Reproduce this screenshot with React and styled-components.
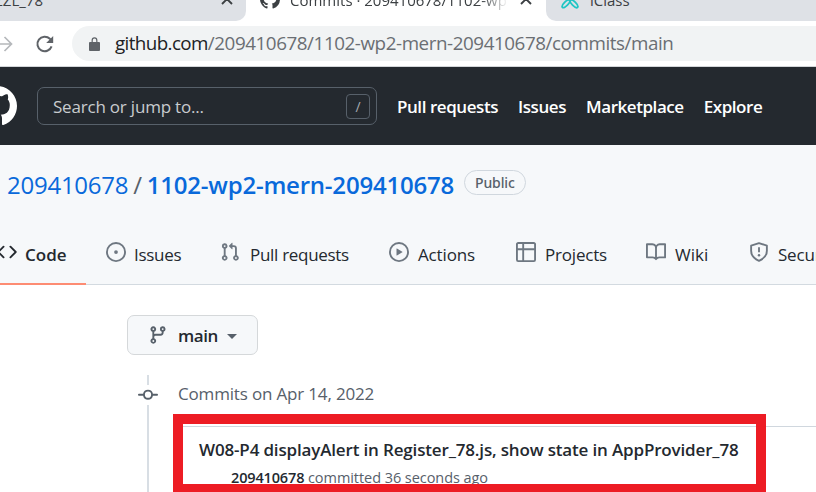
import React from 'react';
import styled, { createGlobalStyle } from 'styled-components';

const GlobalStyle = createGlobalStyle`
  * { box-sizing: border-box; }
  html, body { margin: 0; background: #fff; overflow: hidden; }
`;

const Page = styled.div`
  width: 816px;
  height: 492px;
  overflow: hidden;
  position: relative;
  display: flex;
  flex-direction: column;
  background: #fff;
  color: #24292f;
  font-family: "Open Sans", "Noto Sans", sans-serif;
  font-size: 17px;
  white-space: nowrap;
`;

const Glyph = styled.svg`
  width: ${(p) => p.$size || 20}px;
  height: ${(p) => p.$size || 20}px;
  flex: none;
  display: block;
  fill: currentColor;
`;

/* Browser chrome */
const TabStrip = styled.div`
  flex: none;
  height: 21px;
  display: flex;
  overflow: hidden;
  color: #3c4043;
  font-size: 15px;
`;

const Tab = styled.div`
  width: ${(p) => p.$width}px;
  flex: none;
  height: 21px;
  overflow: hidden;
  background: ${(p) => (p.$active ? '#fff' : '#dee1e6')};
  border-radius: ${(p) => p.$radius || 0};
`;

const TabContent = styled.div`
  display: flex;
  align-items: center;
  height: 30px;
  margin-top: -15px;
  padding: 0 ${(p) => p.$right || 0}px 0 ${(p) => p.$left || 0}px;
`;

const TabTitle = styled.span`
  width: ${(p) => p.$width}px;
  margin: 0 auto 0 ${(p) => p.$gap || 0}px;
  line-height: 30px;
  overflow: hidden;
  direction: ${(p) => (p.$clipStart ? 'rtl' : 'ltr')};
  mask-image: ${(p) => (p.$fade ? 'linear-gradient(90deg, #000 88%, transparent)' : 'none')};
`;

const TabIcon = styled.span`
  display: flex;
  margin-top: ${(p) => p.$shift || 0}px;
`;

const Toolbar = styled.div`
  flex: none;
  height: 46px;
  display: flex;
  align-items: center;
  border-bottom: 1px solid #d3d6d9;
  color: #5f6368;
`;

const ForwardButton = styled.span`
  flex: none;
  display: flex;
  width: 34px;
  margin-left: -7px;
  color: #b5b8bb;
`;

const ReloadButton = styled.span`
  flex: none;
  display: flex;
  width: 45px;
  padding-left: 8px;
`;

const AddressBar = styled.div`
  flex: none;
  width: 780px;
  height: 35px;
  display: flex;
  align-items: center;
  padding: 0 0 1px 17px;
  border-radius: 18px;
  background: #f1f3f4;
  font-size: 18.8px;
`;

const Lock = styled.svg`
  width: 11px;
  height: 14px;
  margin-top: 2px;
  fill: currentColor;
`;

const Host = styled.span`
  margin-left: 15px;
  color: #202124;
  letter-spacing: -0.6px;
`;

const UrlPath = styled.span`
  color: #6a6e73;
  letter-spacing: -0.42px;
`;

/* Site header */
const SiteHeader = styled.header`
  flex: none;
  height: 78px;
  display: flex;
  align-items: center;
  background: #24292f;
  color: #fff;
`;

const MarkLink = styled.a`
  display: flex;
  margin-left: -23px;
`;

const SearchBox = styled.div`
  width: 340px;
  height: 38px;
  margin: 0 20px;
  padding: 0 6px 0 15px;
  display: flex;
  align-items: center;
  justify-content: space-between;
  border: 1px solid #57606a;
  border-radius: 7px;
  color: #c8cbce;
  letter-spacing: -0.2px;
`;

const SlashKey = styled.kbd`
  width: 24px;
  height: 25px;
  display: flex;
  align-items: center;
  justify-content: center;
  border: 1px solid #57606a;
  border-radius: 4px;
  font: 14px "Open Sans", sans-serif;
  color: #a5aab0;
`;

const SiteNav = styled.nav`
  display: flex;
  gap: 20px;
  font-weight: 600;
  letter-spacing: -0.44px;
`;

/* Repository header */
const RepoHeader = styled.section`
  flex: none;
  height: 140px;
  display: flex;
  flex-direction: column;
  justify-content: space-between;
  background: #f6f8fa;
  box-shadow: inset 0 -1px #d3dae0;
`;

const RepoTitle = styled.h1`
  height: 78px;
  margin: 0;
  padding-left: 7px;
  display: flex;
  align-items: center;
  color: #0969da;
  font-size: 24px;
  font-weight: 400;
  letter-spacing: -0.25px;
`;

const Divider = styled.span`
  margin: 0 5px;
  color: #57606a;
`;

const RepoName = styled.strong`
  font-weight: 600;
  letter-spacing: -0.22px;
`;

const Badge = styled.span`
  height: 25px;
  width: 62px;
  margin: -4px 0 0 10px;
  display: flex;
  align-items: center;
  justify-content: center;
  border: 1px solid #d0d7de;
  border-radius: 13px;
  color: #57606a;
  font-family: "Noto Sans", "Open Sans", sans-serif;
  font-size: 14px;
  font-weight: 500;
  letter-spacing: -0.1px;
`;

const RepoTabs = styled.nav`
  display: flex;
  height: 62px;
`;

const RepoTab = styled.a`
  flex: none;
  width: ${(p) => p.$width}px;
  height: 62px;
  margin-left: ${(p) => p.$offset || 0}px;
  padding-bottom: 2px;
  display: flex;
  align-items: center;
  gap: ${(p) => p.$gap || 9}px;
  font-weight: ${(p) => (p.$active ? 600 : 400)};
  letter-spacing: ${(p) => p.$track || 0}px;
  border-bottom: 2px solid ${(p) => (p.$active ? '#fd8c73' : 'transparent')};

  svg { color: ${(p) => (p.$active ? '#24292f' : '#6e7781')}; }
  span { padding-top: 4px; }
`;

/* Commit list */
const Commits = styled.main`
  flex: none;
  padding: 30px 0 0 127px;
`;

const BranchButton = styled.button`
  width: 131px;
  height: 40px;
  padding: 0 0 0 20px;
  display: flex;
  align-items: center;
  border: 1px solid #d5d8da;
  border-radius: 7px;
  background: #f6f8fa;
  color: #57606a;
  font: 600 17px "Open Sans", sans-serif;
  letter-spacing: -0.4px;
`;

const BranchName = styled.span`
  margin: 0 9px 0 10px;
  color: #24292f;
`;

const Caret = styled.i`
  margin-top: 3px;
  border: 5px solid transparent;
  border-top-color: #57606a;
  border-bottom: 0;
`;

const Timeline = styled.div`
  display: flex;
  margin: 20px 0 0 11px;
`;

const Rail = styled.div`
  width: 20px;
  height: 117px;
  display: flex;
  flex-direction: column;
  align-items: center;
  color: #57606a;
`;

const RailLine = styled.div`
  width: 2px;
  flex: ${(p) => (p.$grow ? 1 : 'none')};
  height: 10px;
  background: #d8dee4;
`;

const Day = styled.div`
  flex: 1;
  padding-left: 20px;
`;

const DayTitle = styled.h2`
  height: 39px;
  margin: 0;
  color: #57606a;
  font-size: 17px;
  font-weight: 400;
  line-height: 37px;
  letter-spacing: -0.17px;
`;

const CommitList = styled.div`
  height: 90px;
  margin-top: 12px;
  padding: 11px 0 0 21px;
  border-top: 1px solid #d0d7de;
`;

const CommitTitle = styled.p`
  margin: 0;
  line-height: 24px;
  font-weight: 600;
  letter-spacing: -0.16px;
`;

const CommitMeta = styled.p`
  margin: 6px 0 0 32px;
  color: #57606a;
  font-size: 14.5px;
  line-height: 20px;
  letter-spacing: -0.06px;
`;

const Author = styled.b`
  font-weight: 600;
  color: #24292f;
  letter-spacing: -0.15px;
`;

const Highlight = styled.div`
  position: absolute;
  left: 173px;
  top: 414px;
  width: 593px;
  height: 80px;
  border: 10px solid #ed1c24;
`;

const paths = {
  mark: 'M8 0C3.58 0 0 3.58 0 8c0 3.54 2.29 6.53 5.47 7.59.4.07.55-.17.55-.38 0-.19-.01-.82-.01-1.49-2.01.37-2.53-.49-2.69-.94-.09-.23-.48-.94-.82-1.13-.28-.15-.68-.52-.01-.53.63-.01 1.08.58 1.23.82.72 1.21 1.87.87 2.33.66.07-.52.28-.87.51-1.07-1.78-.2-3.64-.89-3.64-3.95 0-.87.31-1.59.82-2.15-.08-.2-.36-1.02.08-2.12 0 0 .67-.21 2.2.82.64-.18 1.32-.27 2-.27.68 0 1.36.09 2 .27 1.53-1.04 2.2-.82 2.2-.82.44 1.1.16 1.92.08 2.12.51.56.82 1.27.82 2.15 0 3.07-1.87 3.75-3.65 3.95.29.25.54.73.54 1.48 0 1.07-.01 1.93-.01 2.2 0 .21.15.46.55.38A8.013 8.013 0 0016 8c0-4.42-3.58-8-8-8z',
  code: 'M4.72 3.22a.75.75 0 011.06 1.06L2.06 8l3.72 3.72a.75.75 0 11-1.06 1.06L.47 8.53a.75.75 0 010-1.06l4.25-4.25zm6.56 0a.75.75 0 10-1.06 1.06L13.94 8l-3.72 3.72a.75.75 0 101.06 1.06l4.25-4.25a.75.75 0 000-1.06l-4.25-4.25z',
  issue: 'M8 9.5a1.5 1.5 0 100-3 1.5 1.5 0 000 3zM8 0a8 8 0 100 16A8 8 0 008 0zM1.5 8a6.5 6.5 0 1113 0 6.5 6.5 0 01-13 0z',
  pull: 'M7.177 3.073L9.573.677A.25.25 0 0110 .854v4.792a.25.25 0 01-.427.177L7.177 3.427a.25.25 0 010-.354zM3.75 2.5a.75.75 0 100 1.5.75.75 0 000-1.5zm-2.25.75a2.25 2.25 0 113 2.122v5.256a2.251 2.251 0 11-1.5 0V5.372A2.25 2.25 0 011.5 3.25zM11 2.5h-1V4h1a1 1 0 011 1v5.628a2.251 2.251 0 101.5 0V5A2.5 2.5 0 0011 2.5zm1 10.25a.75.75 0 111.5 0 .75.75 0 01-1.5 0zM3.75 12a.75.75 0 100 1.5.75.75 0 000-1.5z',
  play: 'M1.5 8a6.5 6.5 0 1113 0 6.5 6.5 0 01-13 0zM8 0a8 8 0 100 16A8 8 0 008 0zM6.379 5.227A.25.25 0 006 5.442v5.117a.25.25 0 00.379.214l4.264-2.559a.25.25 0 000-.428L6.379 5.227z',
  table: 'M0 1.75C0 .784.784 0 1.75 0h12.5C15.216 0 16 .784 16 1.75v3.585a.746.746 0 010 .83v8.085A1.75 1.75 0 0114.25 16H6.309a.748.748 0 01-1.118 0H1.75A1.75 1.75 0 010 14.25V6.165a.746.746 0 010-.83V1.75zM1.5 6.5v7.75c0 .138.112.25.25.25H5v-8H1.5zM5 5H1.5V1.75a.25.25 0 01.25-.25H5V5zm1.5 1.5v8h7.75a.25.25 0 00.25-.25V6.5h-8zm8-1.5h-8V1.5h7.75a.25.25 0 01.25.25V5z',
  book: 'M0 1.75A.75.75 0 01.75 1h4.253c1.227 0 2.317.59 3 1.501A3.744 3.744 0 0111.006 1h4.245a.75.75 0 01.75.75v10.5a.75.75 0 01-.75.75h-4.507a2.25 2.25 0 00-1.591.659l-.622.621a.75.75 0 01-1.06 0l-.622-.621A2.25 2.25 0 005.258 13H.75a.75.75 0 01-.75-.75V1.75zm8.755 3a2.25 2.25 0 012.25-2.25H14.5v9h-3.757c-.71 0-1.4.201-1.992.572l.004-7.322zm-1.504 7.324l.004-5.073-.002-2.253A2.25 2.25 0 005.003 2.5H1.5v9h3.757a3.75 3.75 0 011.994.574z',
  branch: 'M11.75 2.5a.75.75 0 100 1.5.75.75 0 000-1.5zm-2.25.75a2.25 2.25 0 113 2.122V6A2.5 2.5 0 0110 8.5H6a1 1 0 00-1 1v1.128a2.251 2.251 0 11-1.5 0V5.372a2.25 2.25 0 111.5 0v1.836A2.492 2.492 0 016 7h4a1 1 0 001-1v-.628A2.25 2.25 0 019.5 3.25zM4.25 12a.75.75 0 100 1.5.75.75 0 000-1.5zM3.5 3.25a.75.75 0 111.5 0 .75.75 0 01-1.5 0z',
  commit: 'M10.5 7.75a2.5 2.5 0 11-5 0 2.5 2.5 0 015 0zm1.43.75a4.002 4.002 0 01-7.86 0H.75a.75.75 0 110-1.5h3.32a4.001 4.001 0 017.86 0h3.32a.75.75 0 110 1.5h-3.32z',
};

const Icon = ({ name, size }) => (
  <Glyph $size={size} viewBox="0 0 16 16" aria-hidden="true">
    <path fillRule="evenodd" d={paths[name]} />
  </Glyph>
);

const Outline = ({ size, box = 16, width = 1.5, children }) => (
  <Glyph $size={size} viewBox={`0 0 ${box} ${box}`} aria-hidden="true">
    <g fill="none" stroke="currentColor" strokeWidth={width}>{children}</g>
  </Glyph>
);

const Shield = () => (
  <Outline>
    <path strokeLinejoin="round" d="M8 .9 14.3 2.9V7c0 3.6-2.2 6.3-6.3 8.1C3.9 13.3 1.7 10.6 1.7 7V2.9z" />
    <path d="M8 4.2v4" />
    <circle cx="8" cy="10.5" r="1" fill="currentColor" stroke="none" />
  </Outline>
);

const Close = () => (
  <TabIcon $shift={-2}>
    <Outline size={12} box={12} width={1.9}><path d="M1 1l10 10M11 1 1 11" /></Outline>
  </TabIcon>
);

const repoTabs = [
  { label: 'Issues', icon: <Icon name="issue" />, width: 114, track: -0.3, gap: 8 },
  { label: 'Pull requests', icon: <Icon name="pull" />, width: 169, track: -0.3, gap: 10 },
  { label: 'Actions', icon: <Icon name="play" />, width: 127, track: -0.14 },
  { label: 'Projects', icon: <Icon name="table" />, width: 130, track: -0.2 },
  { label: 'Wiki', icon: <Icon name="book" />, width: 103, track: 0 },
  { label: 'Security', icon: <Shield />, width: 120, track: -0.2 },
];

export default function App() {
  return (
    <Page>
      <GlobalStyle />
      <TabStrip>
        <Tab $width={246} $radius="0 0 10px 0">
          <TabContent $right={13}>
            <TabTitle $width={43} $clipStart>ZZL_78</TabTitle>
            <Close />
          </TabContent>
        </Tab>
        <Tab $width={300} $active>
          <TabContent $left={14} $right={14}>
            <TabIcon $shift={-2}><Icon name="mark" /></TabIcon>
            <TabTitle $width={218} $gap={10} $fade>Commits · 209410678/1102-wp2</TabTitle>
            <Close />
          </TabContent>
        </Tab>
        <Tab $width={270} $radius="0 0 0 10px">
          <TabContent $left={15}>
            <TabIcon>
              <Outline size={18} box={18} width={1.8}>
                <g stroke="#20c5c4">
                  <ellipse cx="5" cy="12.8" rx="5" ry="2" transform="rotate(-45 5 12.8)" />
                  <ellipse cx="13" cy="12.8" rx="5" ry="2" transform="rotate(45 13 12.8)" />
                  <path d="M9 9 4 2M9 9l5-7" />
                </g>
              </Outline>
            </TabIcon>
            <TabTitle $width={100} $gap={11}>iClass</TabTitle>
          </TabContent>
        </Tab>
      </TabStrip>
      <Toolbar>
        <ForwardButton>
          <Outline box={20} width={1.7}><path d="M2 10h16M11.5 3l7 7-7 7" /></Outline>
        </ForwardButton>
        <ReloadButton>
          <Outline box={20} width={2}>
            <path d="M16.6 12.4A7.3 7.3 0 1 1 14.9 4.8L17 6.6" />
            <path fill="currentColor" stroke="none" d="M18.2 2v7h-7z" />
          </Outline>
        </ReloadButton>
        <AddressBar>
          <Lock viewBox="0 0 12 14" preserveAspectRatio="none">
            <path fillRule="evenodd" d="M1 5h1.8V3.5a3.2 3.2 0 0 1 6.4 0V5H11a1 1 0 0 1 1 1v7a1 1 0 0 1-1 1H1a1 1 0 0 1-1-1V6a1 1 0 0 1 1-1zM4.1 5h3.8V3.5a1.9 1.9 0 0 0-3.8 0z" />
          </Lock>
          <Host>github.com</Host>
          <UrlPath>/209410678/1102-wp2-mern-209410678/commits/main</UrlPath>
        </AddressBar>
      </Toolbar>
      <SiteHeader>
        <MarkLink><Icon name="mark" size={40} /></MarkLink>
        <SearchBox>
          <span>Search or jump to...</span>
          <SlashKey>/</SlashKey>
        </SearchBox>
        <SiteNav>
          <span>Pull requests</span>
          <span>Issues</span>
          <span>Marketplace</span>
          <span>Explore</span>
        </SiteNav>
      </SiteHeader>
      <RepoHeader>
        <RepoTitle>
          <span>209410678</span>
          <Divider>/</Divider>
          <RepoName>1102-wp2-mern-209410678</RepoName>
          <Badge>Public</Badge>
        </RepoTitle>
        <RepoTabs>
          <RepoTab $active $width={89} $offset={-3} $gap={8}>
            <Icon name="code" />
            <span>Code</span>
          </RepoTab>
          {repoTabs.map((t, i) => (
            <RepoTab key={t.label} $width={t.width} $offset={i === 0 ? 20 : 0} $track={t.track} $gap={t.gap}>
              {t.icon}
              <span>{t.label}</span>
            </RepoTab>
          ))}
        </RepoTabs>
      </RepoHeader>
      <Commits>
        <BranchButton>
          <Icon name="branch" />
          <BranchName>main</BranchName>
          <Caret />
        </BranchButton>
        <Timeline>
          <Rail>
            <RailLine />
            <Icon name="commit" />
            <RailLine $grow />
          </Rail>
          <Day>
            <DayTitle>Commits on Apr 14, 2022</DayTitle>
            <CommitList>
              <CommitTitle>W08-P4 displayAlert in Register_78.js, show state in AppProvider_78</CommitTitle>
              <CommitMeta><Author>209410678</Author> committed 36 seconds ago</CommitMeta>
            </CommitList>
          </Day>
        </Timeline>
      </Commits>
      <Highlight />
    </Page>
  );
}
